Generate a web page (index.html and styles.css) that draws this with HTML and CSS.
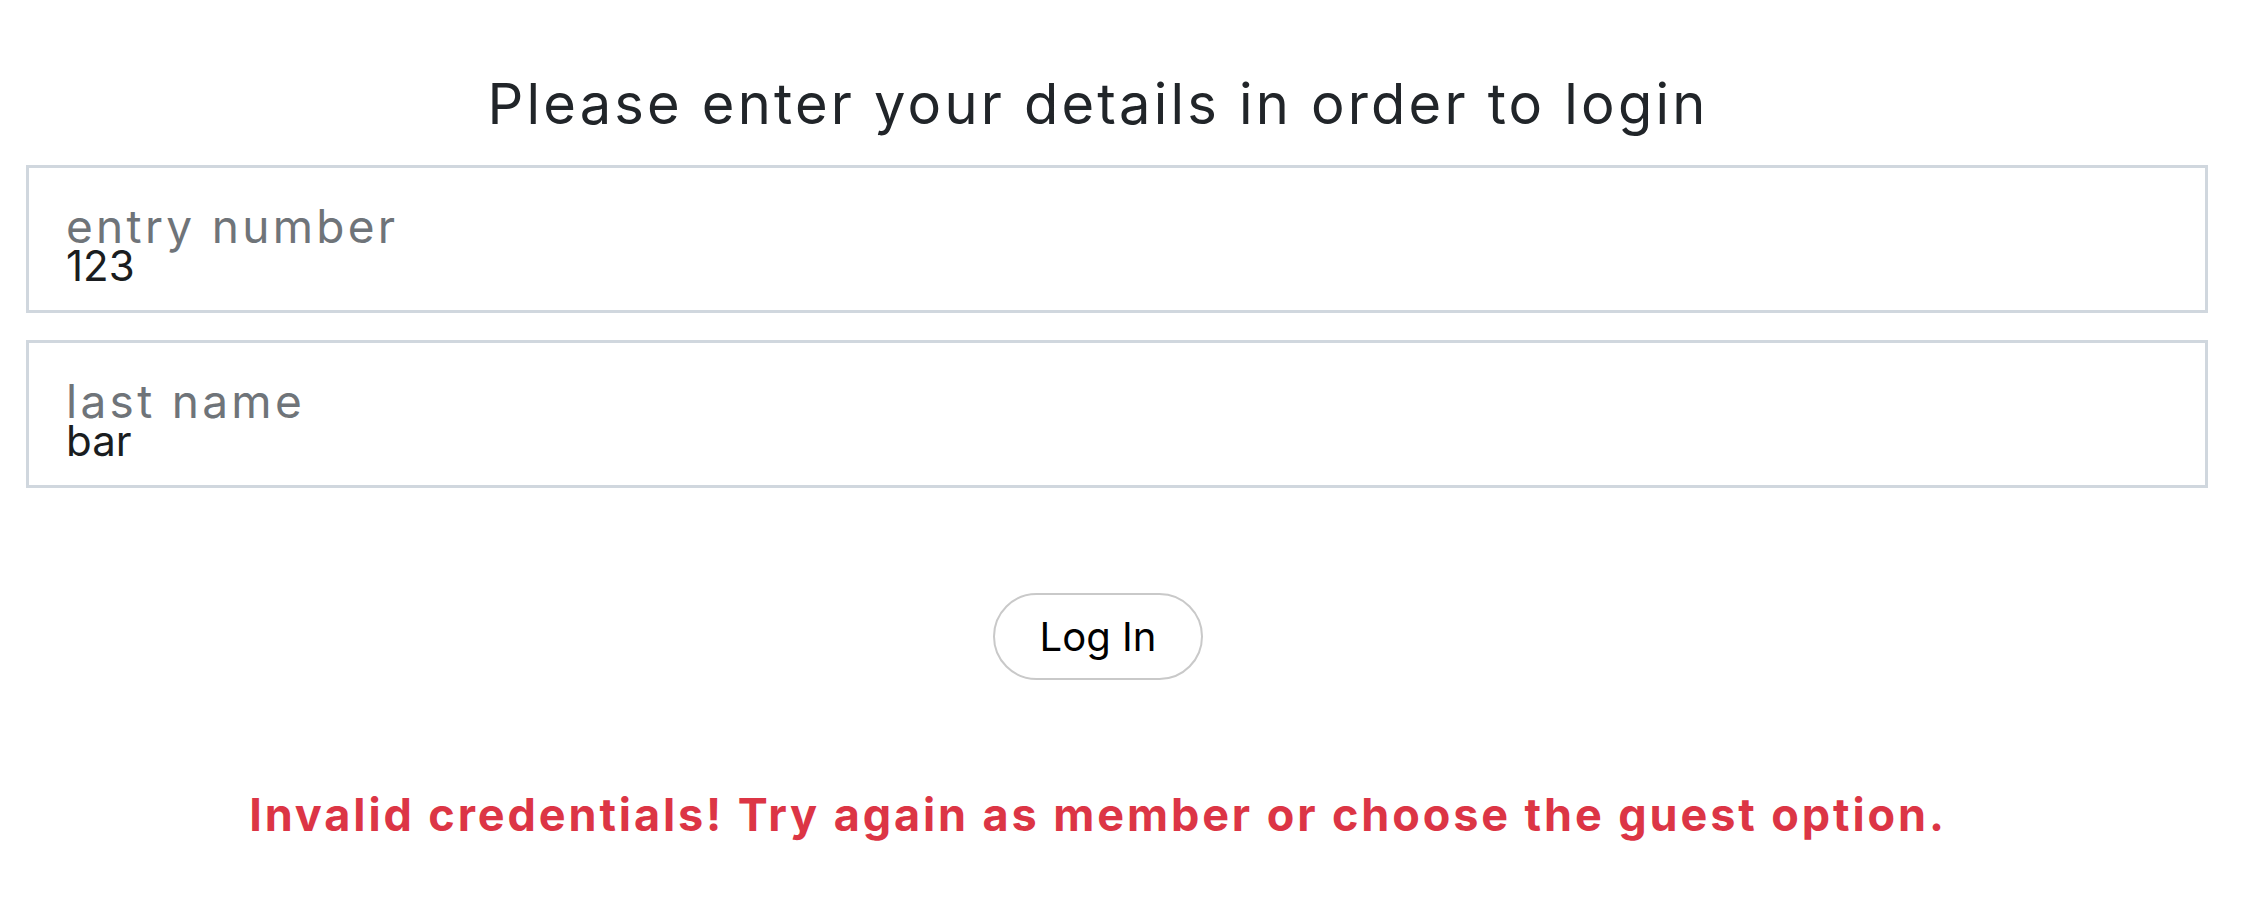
FILE: index.html
```html
<!DOCTYPE html>
<html lang="en">
<head>
    <meta charset="UTF-8">
    <meta name="viewport" content="width=device-width, initial-scale=1.0">
    <title>Login</title>
    <link rel="stylesheet" href="styles.css">
</head>
<body>
    <div class="login">
        <h1 class="login-title">Please enter your details in order to login</h1>

        <form class="login-form">
            <div class="field">
                <label for="entry">entry number</label>
                <input type="text" id="entry" value="123">
            </div>
            <div class="field">
                <label for="lastname">last name</label>
                <input type="text" id="lastname" value="bar">
            </div>

            <button type="button" class="login-btn">Log In</button>
        </form>

        <p class="login-error">Invalid credentials! Try again as member or choose the guest option.</p>
    </div>
</body>
</html>
```

FILE: styles.css
```css
* {
    margin: 0;
    padding: 0;
    box-sizing: border-box;
}

body {
    background-color: #fff;
    font-family: Inter, "Liberation Sans", sans-serif;
    color: #212529;
}

.login {
    width: 2196px;
    text-align: center;
}

.login-title {
    margin-top: 72px;
    font-size: 56px;
    line-height: 64px;
    font-weight: 400;
    letter-spacing: 3.2px;
    color: #212529;
}

.login-form {
    margin-top: 29px;
}

.field {
    height: 148px;
    margin: 0 -12px 27px 26px;
    padding: 38px 37px 0;
    border: 3px solid #d0d7de;
    text-align: left;
}

.field label {
    display: block;
    font-size: 46px;
    line-height: 40px;
    letter-spacing: 3.3px;
    color: #6f7479;
}

.field input {
    display: block;
    width: 100%;
    height: 38px;
    border: none;
    outline: none;
    background: transparent;
    font-family: inherit;
    font-size: 42px;
    color: #1a1d20;
}

.login-btn {
    margin-top: 78px;
    width: 210px;
    height: 87px;
    border: 2px solid #c9c9c9;
    border-radius: 44px;
    background-color: #fff;
    font-family: inherit;
    font-size: 40px;
    color: #000;
    cursor: pointer;
}

.login-error {
    margin-top: 107px;
    font-size: 45px;
    line-height: 56px;
    font-weight: 700;
    letter-spacing: 2.9px;
    color: #dc3545;
}
```
